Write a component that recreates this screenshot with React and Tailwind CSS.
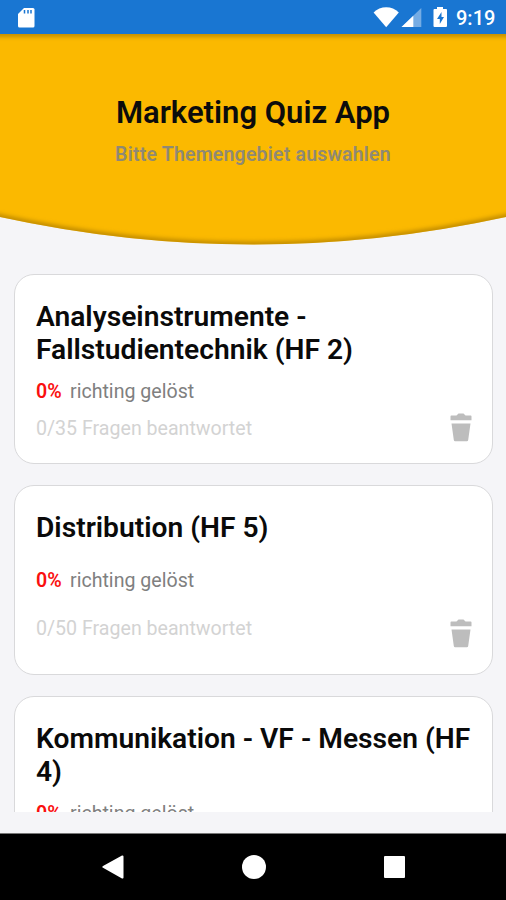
const topics = [
  { title: 'Analyseinstrumente - Fallstudientechnik (HF 2)', total: 35 },
  { title: 'Distribution (HF 5)', total: 50, loose: true },
  { title: 'Kommunikation - VF - Messen (HF 4)', total: 40 },
];

function StatusBar() {
  return (
    <div className="flex h-[34px] shrink-0 items-center justify-between bg-[#1976d2] pr-[11px] pl-[17px]">
      <svg width="18" height="22" viewBox="0 0 18 22" className="mt-px">
        <path d="M7 1h9a1.500 1.500 0 0 1 1.500 1.500v16.500a1.500 1.500 0 0 1-1.500 1.500H2.500A1.500 1.500 0 0 1 1 19V7z" fill="#fff" />
        <path d="M7.500 3v3.500M11 3v3.500M14 3v3.500" stroke="#1976d2" strokeWidth="1.500" />
      </svg>
      <div className="flex items-center">
        <svg width="64" height="24" viewBox="0 0 64 24">
          <path d="M.6 7.500C7.200.4 19.200.4 25.800 7.500L13.200 22.200z" fill="#fff" />
          <path d="M48.300 3V22H28.500z" fill="#fff" opacity=".4" />
          <path d="M40.300 10.800V22H28.500z" fill="#fff" />
        </svg>
        <svg width="15" height="22" viewBox="0 0 15 22" className="-ml-[4px]">
          <path d="M4 1h6v2h3.200A1 1 0 0 1 14 4v16a1 1 0 0 1-1 1H1.500a1 1 0 0 1-1-1V4a1 1 0 0 1 1-1H4z" fill="#fff" />
          <path d="M8.500 6L4 13h2.800v5L11 11H8.500z" fill="#1976d2" />
        </svg>
        <span className="ml-[8px] w-[39px] pt-px text-[20px] leading-6 font-medium whitespace-nowrap text-white">9:19</span>
      </div>
    </div>
  );
}

function Header() {
  return (
    <header className="relative h-[211px] shrink-0">
      <svg width="506" height="211" viewBox="0 0 506 211" className="absolute inset-0">
        <defs>
          <filter id="soft" x="-10%" y="-10%" width="120%" height="120%">
            <feGaussianBlur stdDeviation="2.500" />
          </filter>
          <clipPath id="bowl">
            <path d="M0 0H506V183Q253 238 0 183z" />
          </clipPath>
        </defs>
        <g clipPath="url(#bowl)">
          <path d="M0 0H506V211H0z" fill="#fbb900" />
          <path d="M-30 177L0 183Q253 238 506 183L536 177M-30 0H536" fill="none" stroke="#a87800" strokeWidth="4" filter="url(#soft)" />
        </g>
      </svg>
      <div className="relative flex flex-col items-center pt-[61px]">
        <h1 className="text-[31px] leading-9 font-semibold whitespace-nowrap text-[#0c0c0c]">Marketing Quiz App</h1>
        <p className="mt-[12px] text-[19.500px] leading-6 font-semibold tracking-[0.2px] whitespace-nowrap text-[#8f8974]">
          Bitte Themengebiet auswahlen
        </p>
      </div>
    </header>
  );
}

function Trash() {
  return (
    <svg width="22" height="30" viewBox="0 0 22 30" fill="#bdbdbd" className="shrink-0">
      <path d="M1.300 3.500H6.500L8.500 1.500h5L15.500 3.500h5.200a1 1 0 0 1 .8 1V8.300H.5V4.500a1 1 0 0 1 .8-1z" />
      <path d="M1.500 11.500h19l-2.300 16.500a1.400 1.400 0 0 1-1.400 1.200H5.200A1.400 1.400 0 0 1 3.800 28z" />
    </svg>
  );
}

function TopicCard({ title, total, loose }) {
  return (
    <article className="flex h-[190px] shrink-0 flex-col rounded-[20px] border border-[#d9d9db] bg-white pt-[25px] pr-[20px] pl-[21px]">
      <h2 className="-mr-1 text-[28.200px] leading-[33px] font-semibold text-[#0a0a0a]">{title}</h2>
      <p className={`${loose ? 'mt-[25px]' : 'mt-[14px]'} text-[19.600px] leading-6 text-[#808080]`}>
        <span className="mr-2 inline-block w-[26px] font-semibold text-[#fa0f0f]">0%</span>
        richting gelöst
      </p>
      <div className={`${loose ? 'mt-[23px]' : 'mt-[12px]'} flex items-start justify-between`}>
        <p className="mt-px text-[19.600px] leading-6 text-[#d3d3d3]">0/{total} Fragen beantwortet</p>
        <div className={loose ? 'mt-[2px] flex' : '-mt-[4px] flex'}>
          <Trash />
        </div>
      </div>
    </article>
  );
}

function NavBar() {
  return (
    <nav className="flex h-[67px] shrink-0 items-center justify-between border-t border-[#777] bg-black pr-[101px] pl-[102px]">
      <svg width="22" height="26" viewBox="0 0 22 26" fill="#fff">
        <path d="M20.500 1.500a1 1 0 0 1 1 1v21a1 1 0 0 1-1.500.9L1 13.800a1 1 0 0 1 0-1.700L20 1.600z" />
      </svg>
      <div className="-ml-px size-6 rounded-full bg-white" />
      <div className="h-[22px] w-[21px] rounded-[1px] bg-white" />
    </nav>
  );
}

export default function App() {
  return (
    <div className="flex h-[900px] w-[506px] flex-col overflow-hidden bg-[#f5f5f8] font-['Roboto',sans-serif]">
      <StatusBar />
      <Header />
      <main className="mb-[21px] flex min-h-0 flex-1 flex-col gap-[21px] overflow-hidden pt-[29px] pr-[13px] pl-[14px]">
        {topics.map((topic) => (
          <TopicCard key={topic.title} {...topic} />
        ))}
      </main>
      <NavBar />
    </div>
  );
}
